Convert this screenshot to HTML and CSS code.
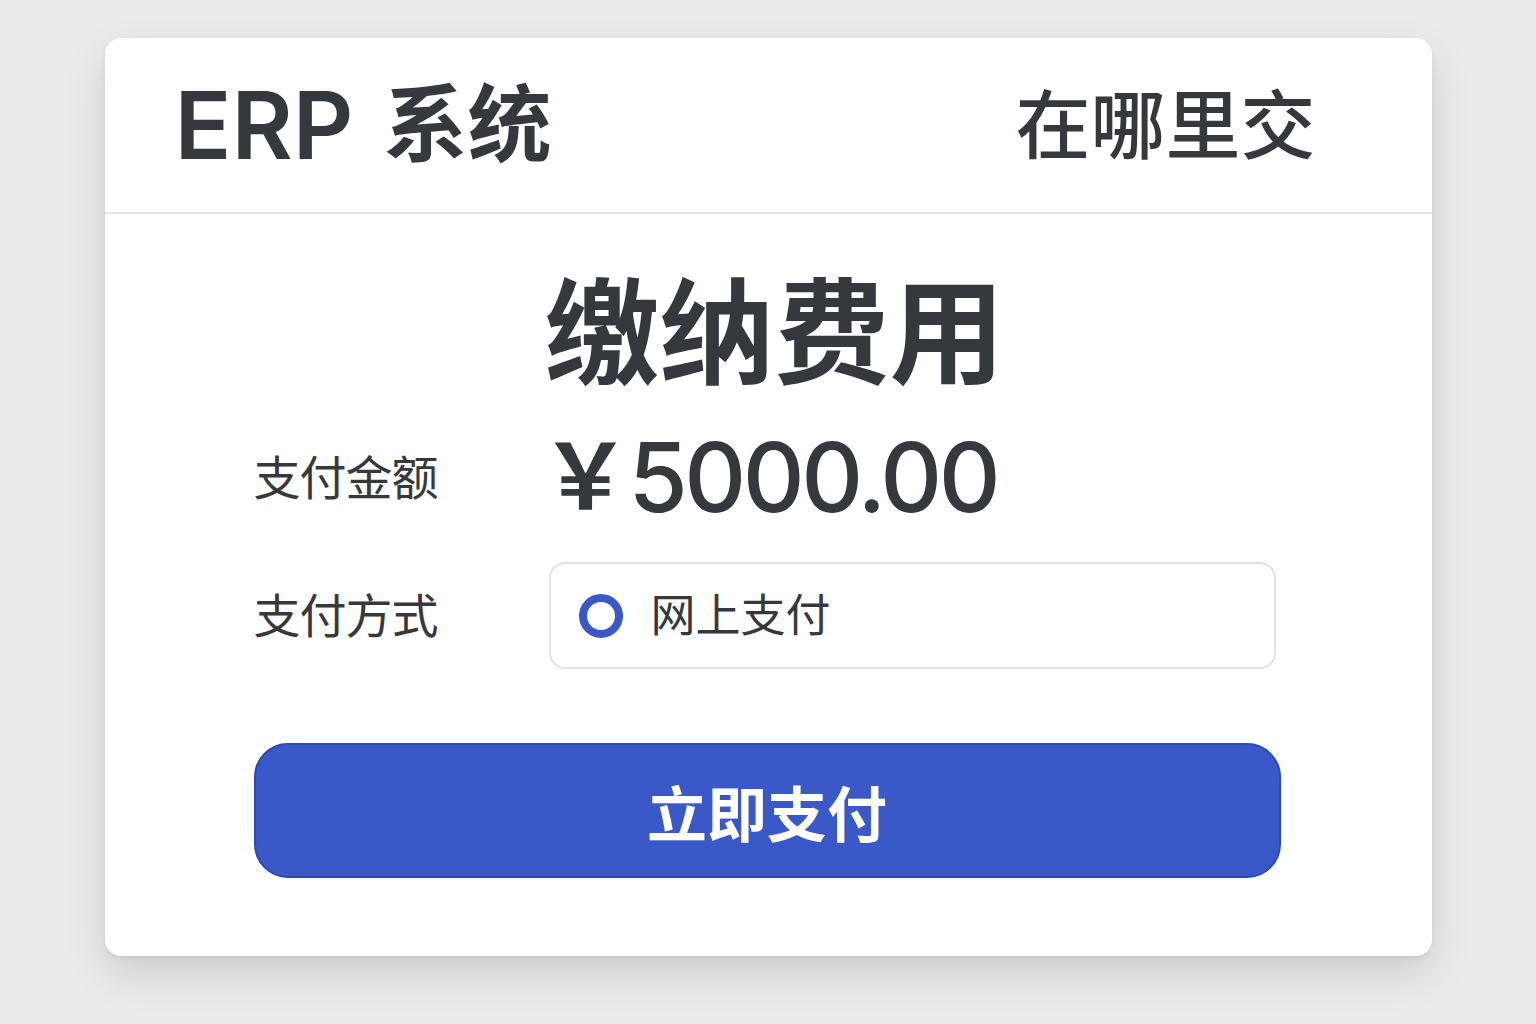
FILE: index.html
```html
<!DOCTYPE html>
<html lang="zh-CN">
<head>
<meta charset="UTF-8" />
<meta name="viewport" content="width=device-width, initial-scale=1" />
<title>ERP 系统 - 缴纳费用</title>
<link rel="stylesheet" href="styles.css">
</head>
<body>
<div class="card">
  <header class="card-head">
    <h1 class="brand"><span class="brand-en">ERP</span> <span class="brand-cn">系统</span></h1>
    <span class="head-link">在哪里交</span>
  </header>
  <main class="card-body">
    <h2 class="title">缴纳费用</h2>

    <div class="row amount-row">
      <span class="label">支付金额</span>
      <span class="amount"><span class="yen">￥</span>5000.00</span>
    </div>

    <div class="row method-row">
      <span class="label">支付方式</span>
      <label class="method-box">
        <span class="radio"></span>
        <span class="method-text">网上支付</span>
      </label>
    </div>

    <button class="pay-btn" type="button">立即支付</button>
  </main>
</div>
</body>
</html>
```

FILE: styles.css
```css
body, html {
  margin: 0; padding: 0;
  font-family: "Inter", "Noto Sans CJK SC", sans-serif;
  background: #ebebea;
  color: #35393e;
  min-height: 100vh;
}
body {
  padding-top: 38px;
  box-sizing: border-box;
}
.card {
  width: 1327px;
  margin: 0 auto;
  background: #fff;
  border-radius: 16px;
  box-shadow: 0 18px 40px rgba(0,0,0,0.13), 0 2px 6px rgba(0,0,0,0.06);
}
.card-head {
  height: 176px;
  box-sizing: border-box;
  display: flex;
  align-items: center;
  justify-content: space-between;
  padding: 0 116px 0 70px;
  border-bottom: 2px solid #e4e4e4;
}
.brand {
  margin: 0;
  font-weight: 600;
  line-height: 1;
  display: flex;
  align-items: center;
  gap: 30px;
}
.brand-en {
  font-size: 94px;
}
.brand-cn {
  font-size: 84px;
}
.head-link {
  font-size: 75px;
  font-weight: 500;
  line-height: 1;
}
.card-body {
  padding: 62px 152px 78px 149px;
}
.title {
  margin: 0;
  text-align: center;
  font-size: 115px;
  font-weight: 700;
  line-height: 1;
  padding-left: 16px;
}
.row {
  display: grid;
  grid-template-columns: 295px 1fr;
  align-items: center;
}
.amount-row {
  margin-top: 38px;
}
.method-row {
  margin-top: 37px;
}
.label {
  font-size: 47px;
  line-height: 1;
  letter-spacing: -1px;
}
.amount {
  font-size: 96px;
  font-weight: 500;
  line-height: 1;
  letter-spacing: -3.5px;
  display: flex;
  align-items: center;
}
.yen {
  font-size: 90px;
  font-weight: 600;
  letter-spacing: 0;
  margin-left: -8px;
  margin-right: -2px;
}
.method-box {
  width: 727px;
  height: 107px;
  box-sizing: border-box;
  border: 2px solid #e2e2e2;
  border-radius: 16px;
  display: flex;
  align-items: center;
  gap: 28px;
  padding-left: 28px;
  cursor: pointer;
}
.radio {
  width: 44px;
  height: 44px;
  box-sizing: border-box;
  border: 8px solid #3a58c8;
  border-radius: 50%;
}
.method-text {
  font-size: 45px;
  line-height: 1;
}
.pay-btn {
  display: block;
  margin-top: 74px;
  width: 1027px;
  height: 135px;
  background: #3a58c8;
  border: 2px solid #2b47b9;
  border-radius: 34px;
  color: #fff;
  font-family: inherit;
  font-size: 60px;
  font-weight: 700;
  cursor: pointer;
}
```
